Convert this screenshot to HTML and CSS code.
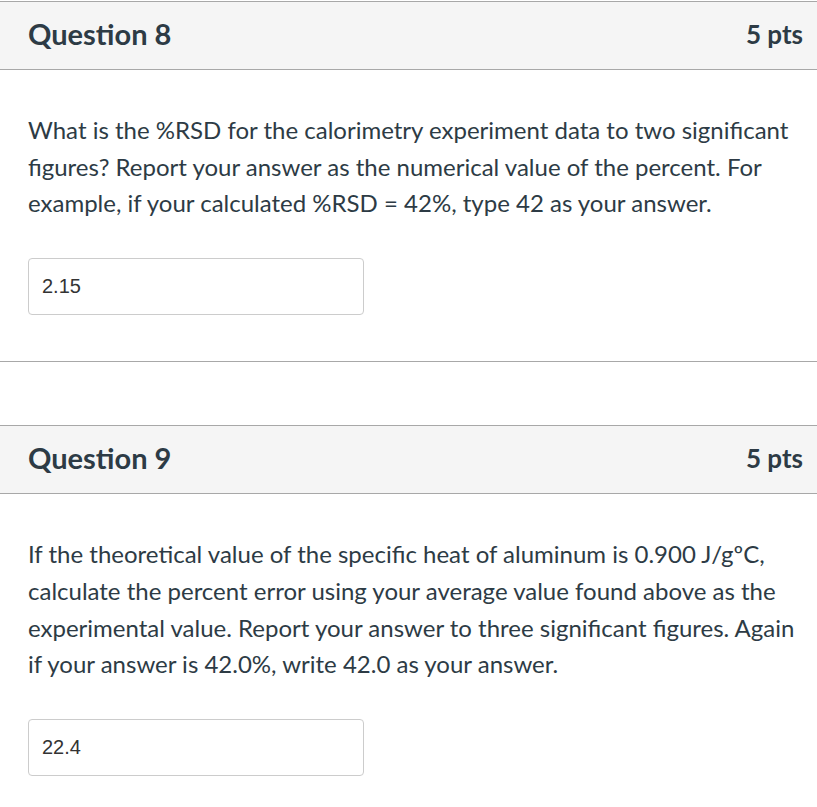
FILE: index.html
```html
<!DOCTYPE html>
<html>
<head>
<meta charset="utf-8">
<link rel="stylesheet" href="styles.css">
</head>
<body>
<div class="page">
  <section class="question q8">
    <header class="qhead">
      <h2 class="qtitle">Question 8</h2>
      <span class="pts">5 pts</span>
    </header>
    <div class="qbody">
      <p class="qtext">What is the %RSD for the calorimetry experiment data to two significant figures? Report your answer as the numerical value of the percent. For example, if your calculated %RSD = 42%, type 42 as your answer.</p>
      <div class="answer">2.15</div>
    </div>
  </section>
  <section class="question q9">
    <header class="qhead">
      <h2 class="qtitle">Question 9</h2>
      <span class="pts">5 pts</span>
    </header>
    <div class="qbody">
      <p class="qtext">If the theoretical value of the specific heat of aluminum is 0.900 J/gºC, calculate the percent error using your average value found above as the experimental value. Report your answer to three significant figures. Again if your answer is 42.0%, write 42.0 as your answer.</p>
      <div class="answer">22.4</div>
    </div>
  </section>
</div>
</body>
</html>
```

FILE: styles.css
```css
html, body {
  margin: 0;
  padding: 0;
  background: #fff;
}
.page {
  padding-top: 1px;
  font-family: Lato, "Noto Sans", sans-serif;
  color: #2d3b45;
}
.question {
  border-top: 1px solid #a8a8a8;
  border-bottom: 1px solid #a8a8a8;
}
.q9 {
  margin-top: 63px;
}
.qhead {
  display: flex;
  align-items: center;
  justify-content: space-between;
  height: 68px;
  padding: 0 14px 4px 28px;
  background: #f5f5f5;
  border-bottom: 1px solid #a8a8a8;
  box-sizing: border-box;
}
.qtitle {
  margin: 0;
  font-size: 29px;
  font-weight: 700;
}
.pts {
  font-size: 26px;
  font-weight: 700;
}
.qbody {
  padding: 42px 14px 46px 28px;
}
.qtext {
  margin: 0;
  font-size: 24px;
  line-height: 36.7px;
}
.answer {
  margin-top: 36px;
  width: 336px;
  height: 57px;
  box-sizing: border-box;
  border: 1px solid #cccccc;
  border-radius: 4px;
  padding-left: 13px;
  display: flex;
  align-items: center;
  font-family: "Liberation Sans", Arial, sans-serif;
  font-size: 20px;
  color: #333;
}
```
